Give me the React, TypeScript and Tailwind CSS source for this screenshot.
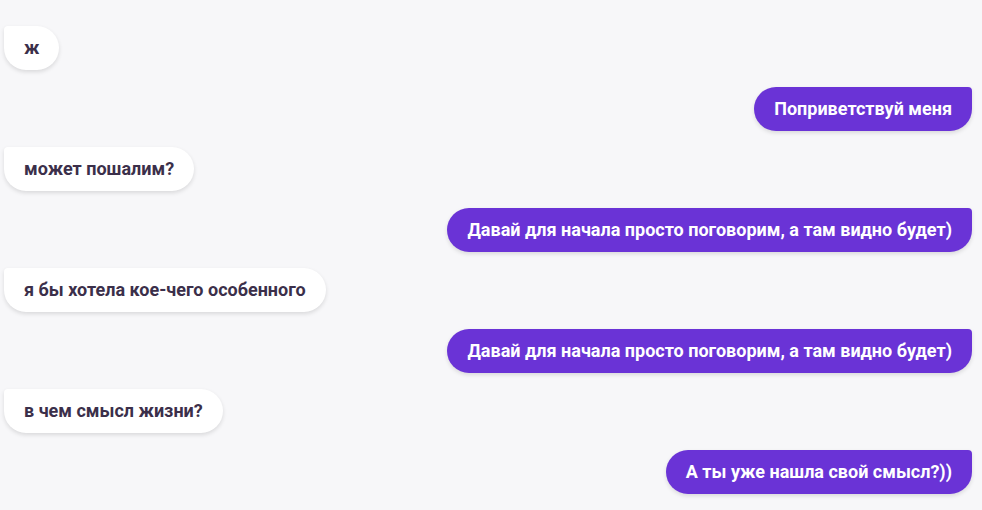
import React from "react";

const msgs: { me: boolean; text: string }[] = [
  { me: false, text: "ж" },
  { me: true, text: "Поприветствуй меня" },
  { me: false, text: "может пошалим?" },
  { me: true, text: "Давай для начала просто поговорим, а там видно будет)" },
  { me: false, text: "я бы хотела кое-чего особенного" },
  { me: true, text: "Давай для начала просто поговорим, а там видно будет)" },
  { me: false, text: "в чем смысл жизни?" },
  { me: true, text: "А ты уже нашла свой смысл?))" },
];

export default function App() {
  return (
    <div
      className="w-[982px] h-[510px] overflow-hidden bg-[#f7f7f9] pt-[26px] pl-[4px] pr-[10px] flex flex-col gap-[16.5px]"
      style={{ fontFamily: "Roboto, 'Noto Sans', sans-serif" }}
    >
      {msgs.map((m, i) =>
        m.me ? (
          <div key={i} className="flex justify-end">
            <div className="h-[44px] flex items-center px-[20px] rounded-[22px] rounded-tr-[4px] bg-[#6a33d6] text-white font-bold text-[18px] leading-[22px] shadow-[0_2px_4px_rgba(0,0,0,0.12)]">
              {m.text}
            </div>
          </div>
        ) : (
          <div key={i} className="flex justify-start">
            <div className="h-[44px] flex items-center px-[20px] rounded-[22px] rounded-tl-[4px] bg-white text-[#3b2f4a] font-bold text-[18px] leading-[22px] shadow-[0_2px_4px_rgba(0,0,0,0.12)]">
              {m.text}
            </div>
          </div>
        )
      )}
    </div>
  );
}
